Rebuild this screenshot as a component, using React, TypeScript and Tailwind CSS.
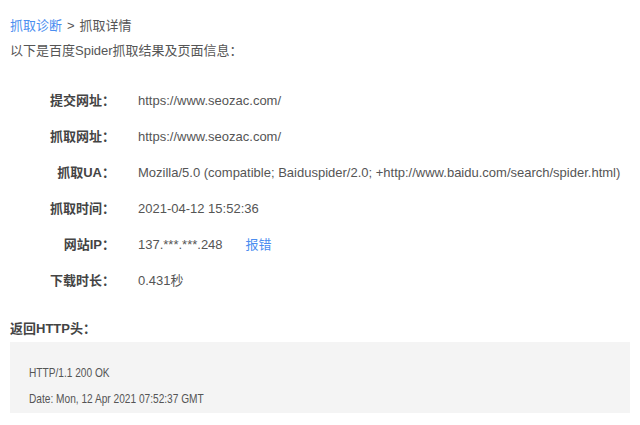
const rows: { label: string; value: React.ReactNode }[] = [
  { label: "提交网址", value: "https://www.seozac.com/" },
  { label: "抓取网址", value: "https://www.seozac.com/" },
  {
    label: "抓取UA",
    value: "Mozilla/5.0 (compatible; Baiduspider/2.0; +http://www.baidu.com/search/spider.html)",
  },
  { label: "抓取时间", value: "2021-04-12 15:52:36" },
  {
    label: "网站IP",
    value: (
      <>
        137.***.***.248
        <a className="ml-[23px] text-[#4b8ef0]" href="#">
          报错
        </a>
      </>
    ),
  },
  { label: "下载时长", value: "0.431秒" },
];

export default function App() {
  return (
    <div
      className="w-[640px] h-[425px] bg-white text-[13px] text-[#555] overflow-hidden"
      style={{ fontFamily: '"Liberation Sans", "Noto Sans CJK SC", sans-serif' }}
    >
      <div className="px-[10px] pt-[16px]">
        <div className="leading-[20px]">
          <a href="#" className="text-[#4b8ef0]">
            抓取诊断
          </a>
          <span className="mx-[5px]">&gt;</span>
          <span>抓取详情</span>
        </div>
        <div className="mt-[5px] leading-[20px]">以下是百度Spider抓取结果及页面信息：</div>

        <div className="mt-[30px] flex flex-col gap-[16px]">
          {rows.map((r, i) => (
            <div key={i} className="flex leading-[20px]">
              <div className="w-[105px] text-right shrink-0 font-bold text-[#444]">
                {r.label}：
              </div>
              <div className="ml-[23px] whitespace-nowrap">{r.value}</div>
            </div>
          ))}
        </div>

        <div className="mt-[28px] leading-[20px] font-bold text-[#444]">返回HTTP头：</div>
        <div className="mt-[3px] bg-[#f4f4f4] px-[19px] pt-[18px] pb-[1px]">
          <div className="leading-[26px] origin-left scale-x-[0.78] whitespace-nowrap">HTTP/1.1 200 OK</div>
          <div className="leading-[26px] origin-left scale-x-[0.78] whitespace-nowrap">
            Date: Mon, 12 Apr 2021 07:52:37 GMT
          </div>
        </div>
      </div>
    </div>
  );
}
